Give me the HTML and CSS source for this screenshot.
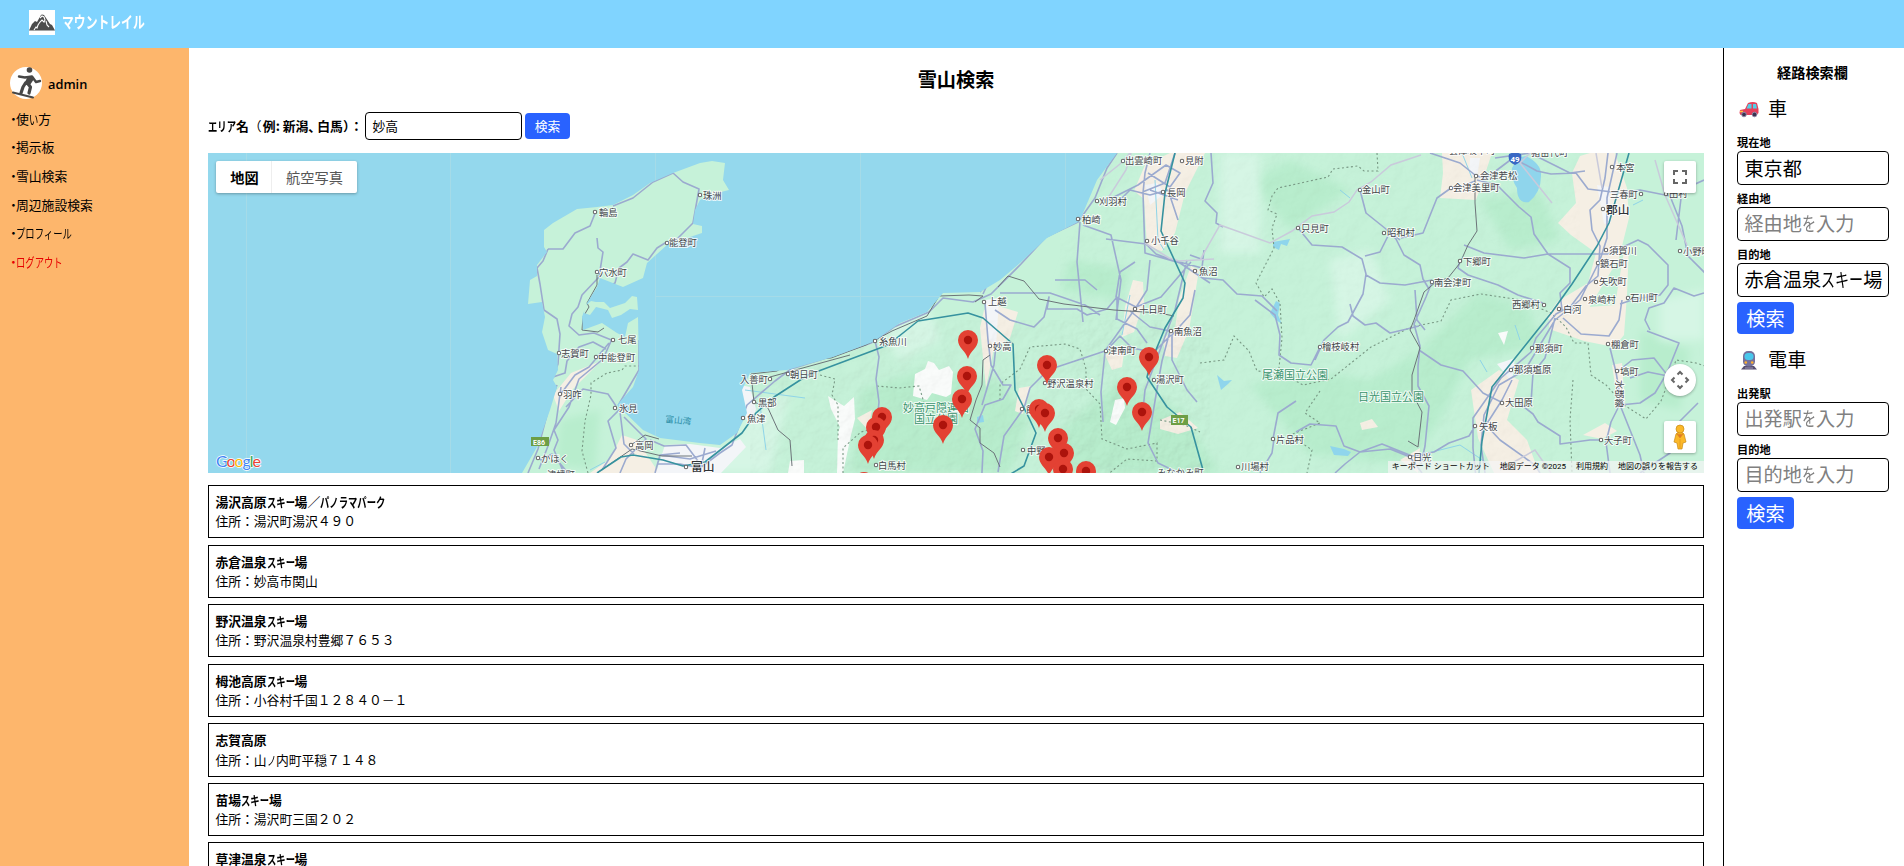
FILE: index.html
```html
<!DOCTYPE html>
<html lang="ja">
<head>
<meta charset="utf-8">
<title>マウントレイル</title>
<link rel="stylesheet" href="styles.css">
</head>
<body>
<header class="header">
  <svg class="logo" viewBox="0 0 26 25"><rect width="26" height="25" fill="#fff"/><path d="M0 20.500 3 14l3-3 2 1 4-7 1-.5 2 .5 6 9 2 1 3 5.500z" fill="#4c4c4c"/><path d="M11 8l2-2 2 1 1 3-1 2-2-2-2 2-2 3-1 3-1-1-2 3M17 11l1 4 2 2" fill="none" stroke="#fff" stroke-width="1.100"/></svg>
  <span class="brand"><span class="kana k7">マウントレイル</span></span>
</header>
<div class="layout">
  <nav class="sidebar">
    <div class="user">
      <svg class="avatar" viewBox="0 0 32 32"><circle cx="16" cy="16" r="16" fill="#fff"/><circle cx="19.500" cy="3" r="2.800" fill="#474747"/><path d="M9 9.500l6 1 7-1 4 5.500 4-1" fill="none" stroke="#474747" stroke-width="2.400" stroke-linecap="round" stroke-linejoin="round"/><path d="M15 9l7.500 0 1.500 3-4 6-6-1 3-6z" fill="#474747"/><path d="M15.500 16l-2.500 4-2 6M18 17l2.500 3-1.500 6" fill="none" stroke="#474747" stroke-width="3.200" stroke-linecap="round" stroke-linejoin="round"/><path d="M3 25.500l20 5" stroke="#474747" stroke-width="2" stroke-linecap="round"/></svg>
      <span class="username">admin</span>
    </div>
    <ul class="menu">
      <li><i>・</i>使<span class="kana k1">い</span>方</li>
      <li><i>・</i>掲示板</li>
      <li><i>・</i>雪山検索</li>
      <li><i>・</i>周辺施設検索</li>
      <li><i>・</i><span class="kana k6">プロフィール</span></li>
      <li class="logout"><i>・</i><span class="kana k5">ログアウト</span></li>
    </ul>
  </nav>
  <main class="main">
    <h1 class="title">雪山検索</h1>
    <form class="search">
      <label class="search-label"><span class="kana k3">エリア</span>名<span class="paren">（</span>例: 新潟<span class="comma">、</span>白馬<span class="paren-end">）</span>：</label>
      <input class="search-input" value="妙高">
      <button class="btn" type="button">検索</button>
    </form>
    <div class="map">
      <svg class="map-canvas" viewBox="208 153 1496 320">
        <defs>
          <clipPath id="landClip"><path d="M522 473 537 447 550 410 557 387 553 380 558 370 557 354 548 350 542 332 545 317 542 302 528 304 530 280 537 276 537 265 547 252 544 247 544 230 553 223 577 209 597 207 613 205 633 195 650 183 673 173 700 163 712 161 725 163 723 180 729 190 713 194 700 200 695 210 693 224 702 226 702 233 687 238 667 245 647 263 643 278 623 287 600 278 597 287 587 303 582 317 583 330 602 323 617 333 625 337 628 323 638 317 639 370 633 387 617 405 643 430 660 438 700 443 720 445 737 433 747 413 742 390 750 373 787 370 833 357 873 342 900 323 927 312 943 293 980 292 1000 280 1020 263 1047 238 1078 222 1083 213 1097 180 1117 153H1704V473Z"/><path d="M585 306l6-5 5 1 8 0 6 6 15-5 7-7 5 1 1 13-8-1-9 6-9 3-4-8-12-3-6 8-6-2z"/></clipPath>
          <filter id="relief" x="0" y="0" width="100%" height="100%"><feTurbulence type="fractalNoise" baseFrequency=".06" numOctaves="4" seed="5"/><feDiffuseLighting surfaceScale="3" lighting-color="#fff"><feDistantLight azimuth="225" elevation="60"/></feDiffuseLighting></filter>
          <filter id="soft"><feGaussianBlur stdDeviation="4"/></filter>
          <g id="pin"><path d="M0 19C-2 11-10 8-10 0A10 10 0 0 1 10 0C10 8 2 11 0 19Z" fill="#e34133"/><circle r="4.200" fill="#ac130c"/></g>
          <path id="towns" d="M595 212h0M667 243h0M597 272h0M613 340h0M559 353h0M596 357h0M560 394h0M615 408h0M631 445h0M538 458h0M686 467h0M700 195h0M1123 161h0M1182 161h0M1163 192h0M1097 201h0M1078 219h0M1147 241h0M1195 271h0M984 302h0M1135 309h0M1171 331h0M1106 351h0M875 341h0M990 346h0M1154 380h0M1045 383h0M770 379h0M788 374h0M754 402h0M743 418h0M876 465h0M1022 409h0M1023 450h0M1360 190h0M1476 176h0M1451 188h0M1612 167h0M1641 194h0M1666 194h0M1603 209h0M1298 228h0M1384 233h0M1606 250h0M1680 251h0M1598 263h0M1460 261h0M1432 282h0M1596 282h0M1544 305h0M1585 299h0M1628 298h0M1559 309h0M1608 344h0M1320 347h0M1532 348h0M1511 370h0M1617 371h0M1502 403h0M1475 426h0M1601 440h0M1273 439h0M1410 457h0M1238 467h0"/>
        </defs>
        <rect x="208" y="153" width="1496" height="320" fill="#94d8ed"/>
        <path d="M246.500 153V473M450.500 153V473M655.500 153V473M860.500 153V473M1065.500 153V473M655 296.500H980" stroke="#a5dbe8" fill="none"/>
        <g clip-path="url(#landClip)">
          <rect x="500" y="153" width="1204" height="320" fill="#c6f2d9"/>
          <g fill="#b8edcd" filter="url(#soft)">
            <path d="M860 390l60-20 80 10 30 40-20 53H850zM1060 430l60-50 60 30 40 63H1060zM1250 385l60-15 60 10 50-30 60-60 50 20 10 35-70 15-30 60-30 45-100-10z"/>
            <path d="M1070 260l60 10-10 30-60-10zM1250 180l40-20 60 30-60 40zM1480 200l60-10 20 50-50 10zM1640 330l50 20-10 60-40-10zM560 420l40-10-5 60-40-5z"/>
          </g>
          <g fill="#d6f6e5" filter="url(#soft)"><path d="M1220 153h40v100h-40zM1330 260l40-10 20 50-50 40zM1480 380l30 10-20 40zM880 330l50-20 10 30-40 20zM660 450h70l20-40 40-20-20 83H660zM1660 300l44-10v50h-44z"/></g>
          <g fill="#f5efe4">
            <path d="M1145 165l25-12h35l-20 40-10 40-13 18-15-4-3-48-10-8zM1133 280l10 2 1 20-10 30-12 5 3-30zM1163 339l12-10 4-30 12-33 8 4-10 60-12 28-12-2zM984 310l14-4 20 6-8 26-16 10-8 40-6-60zM1105 355l20-10-3 22-10 3zM1160 420l20-8 18 16-20 6-18-5z"/>
            <path d="M1442 153h50l-10 30-6 17-36-2 3-25zM1590 153h25l12 35 2 30-10 40-30 50-30 15-13-5 12-17 30-18 8-30-25-18-13-12 18-20-4-30 8-17zM1550 310l65-5 10-60h4l-2 50-3 40-10 12-30-6-35-12zM1471 390l28-20 20 10-12 40 20 20 12 33h-45l-16-35zM1583 435l22-12 12 8-15 8zM1612 365l10-2 3 45-7-4zM1360 423l12-4 6 8-16 3zM857 418l15-8-4 20zM1019 388l12-2-8 28-8-3z"/>
            <path d="M590 473l20-14 12-24 15 5 20 30v3zM553 395l18-22 30-12-28 28-14 22zM1400 460l20-12-2 25z"/>
          </g>
          <g fill="#f3f5f8"><path d="M665 445l25-1 30 4 20-9 6 8-25 26h-65zM985 300l14-2-3 50-8-10zM1470 158l10 0-3 20-8-5zM1145 185l12-2 8 10-15 12zM1597 185l12 2 2 35-7 2zM1497 364l18-6-3 24zM740 385l10 2 6 22-6 16-6-10z"/></g>
          <g fill="#fafcfb"><path d="M915 374l10-5 3-8 6 2 5 7 10-4 4 6-2 22-5 3-14-4-5 7-14-4zM828 396l16 10 10-9 1 22-4 16-8 38h-6l1-40 2-6-9-18zM790 461l14-1v13h-16zM1115 400l9-2 1 10-9 17-6-3zM1498 333l10-2-4 14z"/></g>
          <rect class="relief" x="750" y="320" width="460" height="153" filter="url(#relief)"/>
          <rect class="relief faint" x="1060" y="153" width="520" height="320" filter="url(#relief)"/>
          <g fill="#8fd5ec"><path d="M1512 168q6-12 14-12 16 8 15 20 0 16-12 26-12 2-12-14-6-8-5-20zM1273 242l17-3-3 7-6-2-2 6-6-3zM1270 313l6-12 4 2-2 12 4 9-6-4zM1217 375l7 6 8-1-4 4-7 6zM1330 446l14 3 7 3-3 4-14-1zM977 417l6-2 1 7-7 1z"/></g>
          <g fill="none" stroke="#8ed4e8" stroke-width="1"><path d="M1155 180l3 60 6 10M1130 295l-8 40M1462 153l10 25M1420 455l40-10 30 20M760 405l6 45M745 390l60 8M1340 190l10 8M1515 325l5 15M1480 360l7 12M1633 205l10-5M590 470l15-8"/></g>
          <g class="boundary"><path d="M1377 153l1 18-14 0-6-5-25 3-5 8-50 11-6 8-4 14 9 4-5 14 2 20-18 35 8 14 8-8 8 14 2 35-3 30M1200 363l24-3 10-24 15 15 8 20 24 2 22 12 28-6 40-32 40-20 30-6 10-21 30-6 40 6 30 13 15 14 8 16 14 0 3 32 15 10 18 20 22 14 15-18 10-26 5-15 20 3 30 10M1573 380l-3 40 2 53M1320 391l-15 22 15 10-30 12 22 15-5 23M820 375l15 4-3 16 6 10 0 35M877 386l22 2 20-2 6 20 8 6 20 0M1000 400l0-16 20-15 10-22 35-3 15 5 6 20 0 20 14 15 2 35 25 10 30-6 0 18-30-2-25 20-42 5M843 473l0-25 18-16 15-4M1160 420l25 5 15 7M588 473l-6-22 3-30 6-26 0-12 16-10 15-3 3-4 14 0"/></g>
          <g class="road">
            <path d="M548 249l15 0 12-16 15-7 6-15M613 206l20-8 20-16 20-9 10 9 16 7-6 34-16 16-12 4-8 5-9 12-15-6-6 8-8 6-4 15-12 7M548 249l-5 12-6 7 3 16 4 26 13 9 3 15-2 30-5 13 12-4 2-12 12-14 14-5 13 7M597 238l1 10 5 4-4 25-17 18-4 12-6 7-3 12 10 9 15-2 20 8M557 385l-7 18-12 46-10 24M561 387l-5 36-8 23-9 23M560 395l15-20 14-8 20-24M612 339l-9 20-24 20-10 28-15 23 4 10-4 10 9 21M566 407l17-18 25 5 8 12M620 409l-12 12 8 27-14 22M639 340l0 30-20 34 5 40 10 10M624 417l22 22-20 20-6 14M650 440l14 6 22-1 12 16M655 473l5-18 20-2M540 460l12-6 16 19M660 455l30 4 26-8M705 448l-5 25"/>
            <path d="M1117 153l-10 15-12 30-17 24-32 15-25 27-30 30-18 8-30-4-14 14-35 15-23 16-35 12-45 14-16 12-28 24-15 40-12 8-20 15-20-4-22 0"/>
            <path d="M875 341l4 16-3 22 3 23-2 20 0 30M985 303l3 37 3 25 12 20 8 0-8 14-18 6-10 24 8 22-2 42M995 310l15 10 24 7 10-10 5-20-2 12 30 0 10 6 20-6 10-12 0 22 20 10 10 14M1000 293l50 0 35 12 15 10M980 292l30-38M1080 222l-3 40 6 60M1083 225l28 10 10 45-5 40M1100 200l20 0 10-10 20 5 18-5 10 30M1106 239l40 5 10 10 16 6 30 8 2-18M1150 153l-5 20-2 20 2 60 35 10 30 20M1175 153l-10 30-25 10M1190 255l14 5M1108 200l30-15 28-20 14 8-10 14-22-14M1150 190l28 10M1135 262l-15 10-4 25 20 10 25-10 30-35M1150 260l-3 30-12 19-30 42-30 10-27 9-18 18-6 20-20 28-6 36M1105 352l-4 40 2 30M1105 352l15-16 12 12 20 4M1170 331l-8 30-4 22-10 60 10 20 25 12M1171 335l-20 20M1130 311l20 16 20 4M1187 260l-12 50-30 80-3 30M1195 290l-5 25-18 20 0 25 15 30 10 12M1055 280l30 0 12 10M1003 250l-20 44M996 345l-2 20-12 40"/>
            <path d="M1211 153l2 30-8 18 12 12-1 10 7 4M1203 278l20 2 14 14 25 2 15 15M1298 228l14 17 30 2 20 12 4 15-3 20-15 28-10 5-14 13-9 20M1360 190l6 23 20 16 10 10 8 16 16 10 3 14 6 10M1400 240l-10-8-10 20-15 4M1401 238l22-5 14-35 14-10 12-2 12-5M1366 275l14 8 25 2 27-5M1464 245l20 8 40 5 24-4 60 0 30-14 10 5 20 20 0 20-8 10-25 4-15 5M1432 282l-6 15-12 27 6 22-2 20 0 20 11 20-4 40-4 18M1477 180l20 5 22 22 12 10 3 17 14 20 22 14 0 15-10 10 2 17 14 0M1460 260l-2 8 10 7 30 10 20 10 25 8M1350 304l3 12 12 9 11-2 14 10 17-4 12-3M1415 290l2 30 8 10M1419 350l22 15 22 6 20 22 20 10M1430 153l30 10 15 12 10 4 28-21 24 13 14 3 25-1 12 16 32 4 20-3 30 6 12 30 6 30 20 20 12 20M1495 158l35-5 40 20 15-2M1676 240l6-50 22-10M1255 300l20 15 5 20-1 20 12 8 20 2 9-18"/>
            <path d="M1608 153l-3 25-5 22-10 10 2 20 8 16-2 30-12 10-15 20-15 8-20 24-5 14-30 26-28 40 0 30 5 50M1617 153l-10 45 0 40-7 22-20 40-25 20-30 50-26 15-15 30-3 30 4 28M1555 318l-10 40-12 15-2 30M1512 380l-10 20-16 25 14 15 35 25 5 8M1563 318l18 16 28 2 10-16 3-20M1610 348l6 24 5 30-10 20-5 20 4 31M1617 372l15-12 22-2 14 18-20-4-18 6M1620 405l20 50 4 18M1650 330l-5-10 4-12 15-5 10-15 20 8 10-3M1620 405l20-2 15-10 12-20 12-30-32-12M1515 400l18 14 5 8 22 14 0 8 30-4 12 0M1475 426l-6 10-20 7-15 9-22 4-30-12-22 8-16-6-8-20-26-2-14 8M1273 439l5-26 18-12M1260 473l12-20 2-14M1410 457l-20-8-30 3-15 12-10 9M1410 457l12 16M1640 473l30-20 8-30 20-20"/>
          </g>
          <path class="minor-road" d="M1596 153l6 35M1200 260l20-35 50 18 22-12 20-15 22-4 15-10 8-12 14-8 20-17 30-10M1530 153l-10 10 32 40M1100 180l20-16 10-11M1145 243l24 15 10 3 35-2M1500 470l35-20 16 23M1105 200l5-5 16-25 5-17M1655 160l10 35 22 50"/>
          <path class="rail" d="M597 275l0 10-10 18 2 4-6 10-1 13 16 2 6-4M631 445l14-10 14 4M597 473l35-24 30 7 30 0M770 377l80-22M975 302l8-6-14-1-30 1-12 20-35 15-26 14-35 13-38 2-16 11-26 3 3 28 14 6 10 22 12 10 2 26M998 287l10-11 16 5 15 18 25 5 50 6 45 3 15 3M990 355l-7 5-1 25-6 15-6 20 10 8 0 15 14 10 6 14M1475 178l0 25 2 28-9 14-8 18-12 15-12 4-12 10-10 28-4 10 10 18-8 27 0 18 10 19-4 35-10-6"/>
          <path class="shinkansen" d="M597 473l24-16 12-2 30 5 20 6 22-4 37-29 14-20 18-16 34-22 80-30 30-24 50-8 15 5 30 26 2 46 14 28 7 15-12 33-25 15M1175 153l-10 40-4 38 24 52-2 15-18 30-14 34-4 15 20 30 24 20 12 43M1629 153l-20 70-12 23-25 38-20 28-60 75-10 54-3 32"/>
        </g>
        <use href="#towns" stroke="#666" stroke-width="4.500" stroke-linecap="round"/><use href="#towns" stroke="#fff" stroke-width="2.400" stroke-linecap="round"/>
        <g class="places">
          <text x="599" y="215.500">輪島</text><text x="669" y="246">能登町</text><text x="599" y="275.500">穴水町</text><text x="618" y="343">七尾</text><text x="561" y="356.500">志賀町</text><text x="598" y="360.500">中能登町</text><text x="563" y="398">羽咋</text><text x="619" y="411.500">氷見</text><text x="635" y="448.500">高岡</text><text x="541" y="461.500">かほく</text><text x="547" y="478">津幡町</text><text x="703" y="198.500">珠洲</text>
          <text x="1125" y="164">出雲崎町</text><text x="1185" y="164">見附</text><text x="1167" y="195.500">長岡</text><text x="1099" y="204.500">刈羽村</text><text x="1082" y="223">柏崎</text><text x="1151" y="244">小千谷</text><text x="1199" y="274.500">魚沼</text><text x="988" y="305">上越</text><text x="1139" y="312.500">十日町</text><text x="1174" y="335">南魚沼</text><text x="1108" y="354">津南町</text><text x="879" y="344.500">糸魚川</text><text x="993" y="350">妙高</text><text x="1156" y="383">湯沢町</text><text x="1047" y="387">野沢温泉村</text><text x="740" y="382.500">入善町</text><text x="790" y="378">朝日町</text><text x="758" y="406">黒部</text><text x="747" y="422">魚津</text><text x="878" y="468.500">白馬村</text><text x="1026" y="413">飯山</text><text x="1027" y="453.500">中野</text><text x="1157" y="476">みなかみ町</text>
          <text x="1362" y="193">金山町</text><text x="1449" y="153.500">会津坂下町</text><text x="1531" y="155.500">猪苗代町</text><text x="1480" y="179">会津若松</text><text x="1453" y="191">会津美里町</text><text x="1616" y="170.500">本宮</text><text x="1610" y="197.500">三春町</text><text x="1669" y="197">田村</text><text x="1301" y="231.500">只見町</text><text x="1387" y="236">昭和村</text><text x="1609" y="254">須賀川</text><text x="1683" y="254.500">小野町</text><text x="1600" y="267">鏡石町</text><text x="1463" y="265">下郷町</text><text x="1434" y="286">南会津町</text><text x="1599" y="285">矢吹町</text><text x="1512" y="308">西郷村</text><text x="1588" y="302.500">泉崎村</text><text x="1630" y="301">石川町</text><text x="1563" y="312.500">白河</text><text x="1611" y="347.500">棚倉町</text><text x="1322" y="350">檜枝岐村</text><text x="1535" y="351.500">那須町</text><text x="1514" y="373">那須塩原</text><text x="1620" y="375">塙町</text><text x="1505" y="406">大田原</text><text x="1479" y="429.500">矢板</text><text x="1604" y="443.500">大子町</text><text x="1276" y="442.500">片品村</text><text x="1413" y="461">日光</text><text x="1241" y="470">川場村</text>
          <text class="city" x="1606" y="213.500">郡山</text><text class="city" x="691" y="471">富山</text>
          <text transform="translate(1616 380) rotate(90)">水郡線</text>
          <g class="park"><text x="903" y="412">妙高戸隠連山</text><text x="914" y="423">国立公園</text><text x="1262" y="379">尾瀬国立公園</text><text x="1358" y="401">日光国立公園</text></g>
          <text class="bay" transform="translate(665 422) rotate(6)">富山湾</text>
        </g>
        <g class="badge"><rect x="531" y="437" width="18" height="9"/><text x="533" y="444.500">E86</text><rect x="1171" y="415" width="17" height="10"/><text x="1172.500" y="423">E17</text></g>
        <path d="M1509 154q6-3 12 0 2 8-6 11-8-3-6-11z" fill="#3968c4"/><text class="route" x="1510.500" y="161.500">49</text>
        <g>
          <use href="#pin" x="968" y="340"/><use href="#pin" x="967" y="376"/><use href="#pin" x="962" y="399"/><use href="#pin" x="943" y="425"/><use href="#pin" x="882" y="417"/><use href="#pin" x="876" y="427"/><use href="#pin" x="874" y="440"/><use href="#pin" x="868" y="445"/><use href="#pin" x="1047" y="365"/><use href="#pin" x="1149" y="357"/><use href="#pin" x="1127" y="387"/><use href="#pin" x="1142" y="412"/><use href="#pin" x="1039" y="409"/><use href="#pin" x="1045" y="413"/><use href="#pin" x="1058" y="438"/><use href="#pin" x="1064" y="453"/><use href="#pin" x="1049" y="457"/><use href="#pin" x="1063" y="469"/><use href="#pin" x="1086" y="471"/><use href="#pin" x="864" y="482"/>
        </g>
        <text class="google" x="216" y="467" textLength="45"><tspan fill="#4285f4">G</tspan><tspan fill="#ea4335">o</tspan><tspan fill="#fbbc04">o</tspan><tspan fill="#4285f4">g</tspan><tspan fill="#34a853">l</tspan><tspan fill="#ea4335">e</tspan></text>
      </svg>
      <div class="map-type"><span class="type-on">地図</span><span class="type-off">航空写真</span></div>
      <div class="ctrl full"><svg viewBox="0 0 32 32"><path d="M10 14V10h4M18 10H22v4M22 18V22h-4M14 22H10v-4" fill="none" stroke="#666" stroke-width="2"/></svg></div>
      <div class="ctrl camera"><svg viewBox="0 0 32 32"><path d="M13.500 10.500 16 8l2.500 2.500M13.500 21.500 16 24l2.500-2.500M10.500 13.500 8 16l2.500 2.500M21.500 13.500 24 16l-2.500 2.500" fill="none" stroke="#666" stroke-width="2"/></svg></div>
      <div class="ctrl pegman"><svg viewBox="0 0 32 32"><path d="M12 13q4-4 8 0l2 8-3 1-1 6h-4l-1-6-3-1z" fill="#fbb829" stroke="#c98a16" stroke-width=".7"/><circle cx="16" cy="8" r="4" fill="#fbb829" stroke="#c98a16" stroke-width=".7"/><path d="M12.500 12.500q3.500 2 7 0L16 17zM16 18v9" fill="#e4752b" stroke="#d98e1b" stroke-width=".6"/></svg></div>
      <div class="credits"><span>キーボード ショートカット</span><span>地図データ ©2025</span><span>利用規約</span><span>地図の誤りを報告する</span></div>
    </div>
    <div class="results">
      <div class="card"><b>湯沢高原<span class="kana k3">スキー</span>場／<span class="kana k7">パノラマパーク</span></b><p>住所：湯沢町湯沢４９０</p></div>
      <div class="card"><b>赤倉温泉<span class="kana k3">スキー</span>場</b><p>住所：妙高市関山</p></div>
      <div class="card"><b>野沢温泉<span class="kana k3">スキー</span>場</b><p>住所：野沢温泉村豊郷７６５３</p></div>
      <div class="card"><b>栂池高原<span class="kana k3">スキー</span>場</b><p>住所：小谷村千国１２８４０－１</p></div>
      <div class="card"><b>志賀高原</b><p>住所：山<span class="kana k1">ノ</span>内町平穏７１４８</p></div>
      <div class="card"><b>苗場<span class="kana k3">スキー</span>場</b><p>住所：湯沢町三国２０２</p></div>
      <div class="card"><b>草津温泉<span class="kana k3">スキー</span>場</b><p>住所：草津町草津</p></div>
    </div>
  </main>
  <aside class="route-panel">
    <h2 class="panel-title">経路検索欄</h2>
    <div class="mode"><svg class="emoji" viewBox="0 0 20 20"><path d="M1 11l5-1 3-6q5-2 9 0l1.500 6v4l-2 2H1.500L.5 14z" fill="#e5405b"/><path d="M7.500 9.500l2-4.500h3v4.500zM14 5h3l1 4.500h-4z" fill="#55cfe8"/><path d="M1 12.500h3" stroke="#ffc83d" stroke-width="1.500"/><g fill="#3b3350" stroke="#8f89a8"><circle cx="5" cy="15.500" r="2.300"/><circle cx="15.500" cy="15.500" r="2.300"/></g></svg>車</div>
    <label class="field">現在地<input value="東京都"></label>
    <label class="field">経由地<span class="box hint">経由地<span class="kana k1">を</span>入力</span></label>
    <label class="field">目的地<span class="box">赤倉温泉<span class="kana k3">スキー</span>場</span></label>
    <button class="btn large" type="button">検索</button>
    <div class="mode train"><svg class="emoji" viewBox="0 0 20 20"><path d="M5 16h10l3 3.500H2z" fill="#574f70"/><rect x="4" y="1" width="12" height="15.500" rx="5" fill="#74719c"/><rect x="5.500" y="3" width="9" height="7" rx="3.500" fill="#48c7ec"/><circle cx="6.800" cy="12.500" r="1.300" fill="#ffb02e"/><circle cx="13.200" cy="12.500" r="1.300" fill="#ffb02e"/><path d="M6 18h8" stroke="#9c95b8"/></svg>電車</div>
    <label class="field">出発駅<span class="box hint">出発駅<span class="kana k1">を</span>入力</span></label>
    <label class="field">目的地<span class="box hint">目的地<span class="kana k1">を</span>入力</span></label>
    <button class="btn large" type="button">検索</button>
  </aside>
</div>
</body>
</html>
```
FILE: styles.css
```css
* { box-sizing: border-box; }
html, body { height: 100%; }
body {
  margin: 0;
  height: 866px;
  overflow: hidden;
  display: flex;
  flex-direction: column;
  background: #fff;
  color: #000;
  font: 12.8px/19.2px "Noto Sans CJK JP", sans-serif;
}
h1, h2, p, ul { margin: 0; padding: 0; }
/* condensed kana: each character takes .73em */
.kana { display: inline-block; white-space: nowrap; transform: scaleX(.73); transform-origin: left; }
.k1 { width: 1em; margin-right: -.27em; }
.k3 { width: 3em; margin-right: -.81em; }
.k5 { width: 5em; margin-right: -1.35em; }
.k6 { width: 6em; margin-right: -1.62em; }
.k7 { width: 7em; margin-right: -1.89em; }
.header {
  flex: none;
  height: 48px;
  padding: 10px 29px;
  display: flex;
  align-items: flex-start;
  gap: 7px;
  background: #80d4ff;
}
.logo { width: 26px; height: 25px; }
.brand { color: #fff; font-size: 16.200px; line-height: 22px; font-weight: 700; }
.sidebar { flex: none; width: 189px; padding: 19px 10px; background: #fdb66c; }
.layout { flex: 1; min-height: 0; display: flex; }
.user { display: flex; align-items: center; gap: 6px; height: 32px; }
.avatar { width: 32px; height: 32px; }
.username { font: 600 12.800px/20px "Open Sans", sans-serif; padding-top: 2px; }
.menu { list-style: none; padding-top: 9.600px; }
.menu li { height: 28.700px; white-space: nowrap; }
.menu i { display: inline-block; width: 6px; text-indent: -3px; font-style: normal; }
.logout { color: #e60000; }
.main { flex: 1; min-width: 0; padding: 16px 19px 0; overflow: hidden; }
.title { height: 32px; line-height: 31px; font-size: 19.200px; text-align: center; font-weight: 600; }
.search { display: flex; align-items: center; height: 28px; margin: 16px 0 13px; }
.search-label { width: 157px; white-space: nowrap; font-weight: 600; }
.paren { display: inline-block; width: 14px; font-weight: 400; }
.comma { display: inline-block; width: 9px; }
.paren-end { display: inline-block; width: 7px; }
.search-input, .field input, .box {
  border: 1px solid #000;
  border-radius: 4px;
  padding: 0 6.400px;
  font: inherit;
  color: #000;
  background: #fff;
}
.search-input { width: 157px; height: 28px; padding-bottom: 2px; }
.btn {
  width: 45px;
  height: 26px;
  margin-left: 3px;
  padding: 0;
  border: 0;
  border-radius: 4px;
  background: #2962ff;
  color: #fff;
  font: inherit;
}
.map { position: relative; height: 320px; overflow: hidden; }
.map-canvas { display: block; width: 100%; height: 320px; }
.relief { mix-blend-mode: multiply; opacity: .14; }
.faint { opacity: .08; }
.boundary { fill: none; stroke: #789884; stroke-width: 1.100; stroke-dasharray: 2 2.500; }
.road { fill: none; stroke: #9baacf; stroke-width: 1.600; stroke-linejoin: round; }
.minor-road { fill: none; stroke: #c9cadb; stroke-width: 1.500; }
.rail { fill: none; stroke: #6c7479; stroke-width: 1; }
.shinkansen { fill: none; stroke: #36929f; stroke-width: 1.600; stroke-linejoin: round; }
.places { font-size: 9.300px; fill: #44474b; stroke: #fff; stroke-width: 2px; stroke-opacity: .8; paint-order: stroke; stroke-linejoin: round; }
.city { font-size: 11.700px; font-weight: 500; fill: #303336; }
.park { font-size: 11px; fill: #39936c; }
.bay { font-size: 8.700px; fill: #2b8da6; stroke: none; }
.badge { fill: #6d9e45; font: 700 7px "Roboto", sans-serif; }
.badge text, .route { fill: #fff; }
.route { font: 700 8px "Roboto", sans-serif; }
.google { font: 16px "Lato", sans-serif; stroke: #fff; stroke-width: 1.500px; paint-order: stroke; }
.map-type, .ctrl { position: absolute; background: #fff; border-radius: 2px; box-shadow: 0 1px 3px rgba(0,0,0,.3); }
.map-type { left: 8px; top: 8px; height: 32px; display: flex; font-size: 14.200px; line-height: 32px; }
.type-on { width: 56px; padding-left: 2px; text-align: center; font-weight: 600; border-right: 1px solid #eee; }
.type-off { width: 85px; text-align: center; color: #565656; }
.ctrl { right: 8px; width: 32px; height: 32px; }
.ctrl svg { display: block; }
.full { top: 8px; }
.camera { top: 211px; border-radius: 50%; }
.pegman { top: 268px; }
.credits {
  position: absolute;
  right: 0;
  bottom: 0;
  height: 12px;
  padding: 0 6px 0 4px;
  display: flex;
  gap: 10px;
  background: rgba(245,245,245,.7);
  font: 8px/11px "Roboto", "Noto Sans CJK JP", sans-serif;
  white-space: nowrap;
}
.results { display: flex; flex-direction: column; gap: 6.400px; padding-top: 12px; }
.card { flex: none; height: 53.200px; padding: 6px 6.400px; border: 1px solid #000; white-space: nowrap; }
.card b { display: block; font-weight: 600; }
.route-panel { flex: none; width: 181px; border-left: 1px solid #000; padding: 12px 14px 0 13px; }
.panel-title { font-size: 14.200px; line-height: 24px; text-align: center; font-weight: 600; padding-right: 2px; }
.mode { display: flex; align-items: center; gap: 9px; height: 29px; margin: 10px 0 11px; padding-left: 2px; font-size: 19.200px; }
.mode.train { margin: 11px 0; }
.emoji { width: 20px; height: 20px; }
.field { display: block; height: 56px; font-size: 11.200px; line-height: 15px; font-weight: 600; padding-top: 1px; }
.field input, .box { display: block; width: 152px; height: 34px; margin-top: 1px; font-size: 19.200px; line-height: 30px; font-weight: 400; white-space: nowrap; }
.hint { color: #808080; }
.route-panel .btn.large { display: block; width: 57px; height: 32px; margin: 0; font-size: 19.200px; line-height: 30px; }
```
